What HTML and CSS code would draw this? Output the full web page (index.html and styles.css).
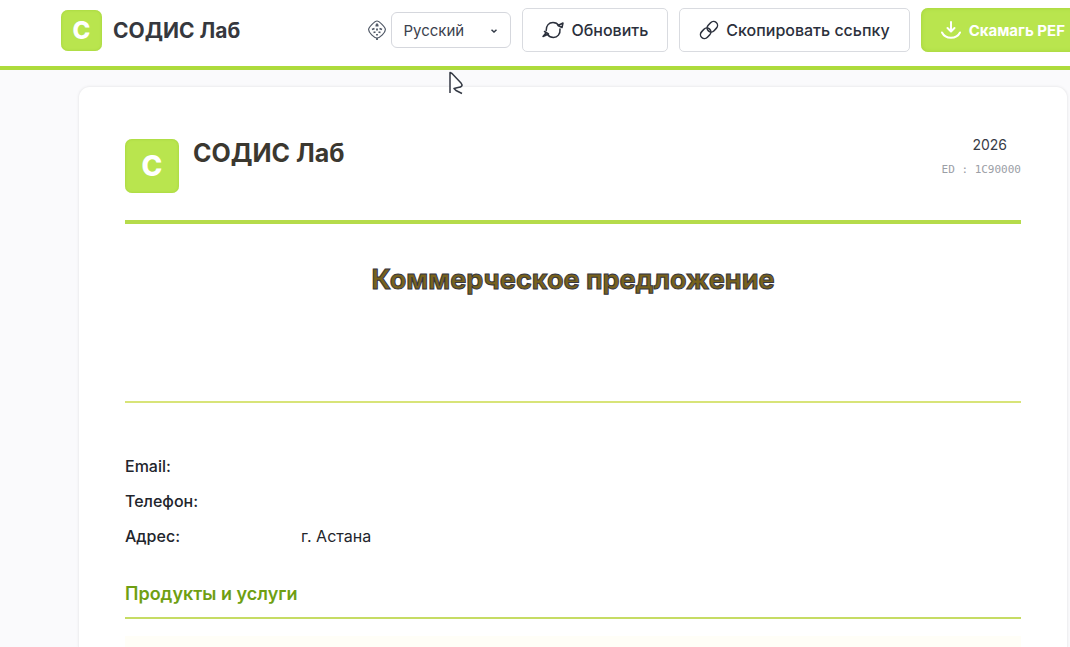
FILE: index.html
```
<!DOCTYPE html>
<html lang="ru">
<head>
<meta charset="UTF-8">
<meta name="viewport" content="width=device-width, initial-scale=1">
<title>Коммерческое предложение</title>
<link rel="stylesheet" href="styles.css">
</head>
<body>

<header class="topbar">
  <div class="brand">
    <div class="logo">С</div>
    <span class="brand-name">СОДИС Лаб</span>
  </div>

  <div class="actions">
    <div class="lang">
      <label for="lang" aria-label="Язык">
        <svg class="lang-icon" width="18" height="20" viewBox="0 0 18 20" fill="none" stroke="#505866" stroke-width="1.2">
          <path d="M9 1C11 1 17.400 7 17.400 9.500C17.400 12.500 12 18 9 18C6 18 .6 12.500 .6 9.500C.6 7 7 1 9 1Z"/>
          <path d="M9 3.500V6M7.500 5.500H10.500M4 9.500L6.500 8.500M11.500 8.500L14 9.500M9 8.500V10.500M5.500 12.500L7.500 12M10.500 12L12.500 12.500M9 14V15.500M9 18V20" stroke-width="1.800"/>
        </svg>
      </label>
      <div class="select-wrap">
        <select id="lang">
          <option selected>Русский</option>
          <option>English</option>
        </select>
        <svg class="chevron" width="6" height="4" viewBox="0 0 6 4" fill="none" stroke="#333b48" stroke-width="1.500"><path d="M.5 .7L3 3L5.500 .7"/></svg>
      </div>
    </div>

    <button class="btn" type="button">
      <svg width="22" height="20" viewBox="0 0 22 20" fill="none" stroke="#2b303c" stroke-width="1.500" stroke-linecap="round" stroke-linejoin="round">
        <path d="M4.200 10.500C4 5.500 7 2.500 11 2.500C13.500 2.500 15.500 3.500 16.800 5.500M18 9C18.500 14 15.500 17.500 11.500 17.500C9 17.500 7 16.500 5.500 14.500"/>
        <path d="M21 3L20 7.500L16 5.500ZM2.500 11.500L6.500 14L1 16.500L3.500 13.500"/>
      </svg>
      Обновить
    </button>

    <button class="btn" type="button">
      <svg width="20" height="20" viewBox="0 0 20 20" fill="none" stroke="#2b303c" stroke-width="1.500">
        <rect x="7.500" y="2.500" width="11.500" height="8" rx="4" transform="rotate(-47 13.500 6.500)"/>
        <rect x="1" y="9.500" width="11.500" height="8" rx="4" transform="rotate(-47 6.500 13.500)"/>
      </svg>
      Скопировать ссьпку
    </button>

    <button class="btn btn-primary" type="button">
      <svg width="22" height="20" viewBox="0 0 22 20" fill="none" stroke="#fff" stroke-width="2" stroke-linecap="round" stroke-linejoin="round">
        <path d="M11 2V11M7.500 8L11 11.500L14.500 8M2 12.500C5.500 19.500 16.500 19.500 20 12.500"/>
      </svg>
      Скамагь PEF
    </button>
  </div>
</header>

<main class="page">
  <article class="sheet">
    <div class="sheet-head">
      <div class="logo logo-lg">С</div>
      <div class="company">СОДИС Лаб</div>
      <div class="meta">
        <div class="year">2026</div>
        <div class="doc-id">ED : 1С90000</div>
      </div>
    </div>

    <h1 class="title">Коммерческое предложение</h1>

    <dl class="contacts">
      <dt>Email:</dt><dd></dd>
      <dt>Телефон:</dt><dd></dd>
      <dt>Адрес:</dt><dd>г. Астана</dd>
    </dl>

    <h2 class="section-title">Продукты и услуги</h2>
    <div class="products"></div>
  </article>
</main>

<svg class="cursor" width="16" height="24" viewBox="0 0 16 24" fill="#fff" stroke="#343944" stroke-width="1.500" stroke-linejoin="round">
  <path d="M2 22V1.500L4 2.500L13 12C15 14.500 14 16 10 16.500L6 17.500L8 19.500L14 22.500"/>
</svg>

</body>
</html>
```
FILE: styles.css
```
* {
  box-sizing: border-box;
}

body {
  margin: 0;
  background: #fafafc;
  color: #22252c;
  font-family: Inter, "Liberation Sans", sans-serif;
  font-size: 16px;
  overflow-x: hidden;
}

/* Top bar */
.topbar {
  display: flex;
  align-items: center;
  justify-content: space-between;
  padding: 8px 0 14px 61px;
  background: #fff;
  border-bottom: 4px solid #addb3c;
}

.brand {
  display: flex;
  align-items: center;
  gap: 11px;
}

.brand-name {
  font-size: 21px;
  font-weight: 700;
  color: #36383e;
  white-space: nowrap;
}

.logo {
  display: flex;
  align-items: center;
  justify-content: center;
  flex: none;
  width: 41px;
  height: 41px;
  border-radius: 7px;
  background: #b9e54e;
  box-shadow: inset 0 0 3px #a3d23a;
  color: #fff;
  font-size: 24px;
  font-weight: 800;
}

.actions {
  display: flex;
  align-items: center;
  gap: 11px;
  margin-right: -14px;
}

.lang {
  display: flex;
  align-items: center;
  gap: 5px;
}

.lang-icon {
  display: block;
}

.select-wrap {
  position: relative;
}

.select-wrap select {
  appearance: none;
  display: block;
  width: 120px;
  height: 36px;
  padding: 0 11px;
  border: 1px solid #d5d7dd;
  border-radius: 6px;
  background: #fff;
  color: #3c424e;
  font-family: inherit;
  font-size: 15px;
}

.chevron {
  position: absolute;
  right: 14px;
  top: 17px;
  pointer-events: none;
}

.btn {
  display: flex;
  align-items: center;
  gap: 7px;
  height: 44px;
  padding: 0 19px;
  border: 1px solid #d9dbe0;
  border-radius: 5px;
  background: #fff;
  color: #2b303c;
  font-family: inherit;
  font-size: 16px;
  font-weight: 500;
  white-space: nowrap;
  cursor: pointer;
}

.btn-primary {
  border: none;
  border-radius: 7px;
  background: #b9e54e;
  box-shadow: inset 0 0 4px #a3d23a;
  color: #fff;
  font-size: 15px;
  font-weight: 700;
}

/* Document */
.page {
  padding: 16px 2px 0 78px;
}

.sheet {
  padding: 52px 46px 0;
  border: 1px solid #f0f0f2;
  border-bottom: none;
  border-radius: 12px 12px 0 0;
  background: #fff;
  box-shadow: 0 0 3px rgba(0, 0, 0, 0.05);
}

.sheet-head {
  display: flex;
  align-items: flex-start;
  gap: 14px;
  padding-bottom: 27px;
  border-bottom: 4px solid #b5db4b;
}

.logo-lg {
  width: 54px;
  height: 54px;
  font-size: 28px;
}

.company {
  flex: 1;
  font-size: 25px;
  line-height: 28px;
  font-weight: 700;
  color: #3b3830;
}

.meta {
  text-align: right;
}

.year {
  padding-right: 14px;
  font-size: 14px;
  line-height: 12px;
  color: #383b46;
}

.doc-id {
  margin-top: 12px;
  font-family: "DejaVu Sans Mono", monospace;
  font-size: 11px;
  line-height: 14px;
  color: #9b9ea6;
}

.title {
  margin: 0;
  padding: 38px 0 103px;
  border-bottom: 2px solid #d8e478;
  text-align: center;
  font-size: 27px;
  line-height: 36px;
  font-weight: 700;
  color: #78621c;
  -webkit-text-stroke: 1px #35353f;
}

.contacts {
  display: grid;
  grid-template-columns: 176px 1fr;
  grid-auto-rows: 35px;
  align-items: center;
  margin: 45px 0 0;
}

.contacts dt {
  font-weight: 500;
}

.contacts dd {
  margin: 0;
}

.section-title {
  margin: 29px 0 0;
  padding-bottom: 11px;
  border-bottom: 2px solid #c6dc64;
  font-size: 18px;
  line-height: 24px;
  font-weight: 600;
  color: #6f9f12;
}

.products {
  height: 11px;
  margin-top: 17px;
  background: #fffef7;
}

/* Pointer over the page */
.cursor {
  position: absolute;
  left: 448px;
  top: 71px;
}
```
